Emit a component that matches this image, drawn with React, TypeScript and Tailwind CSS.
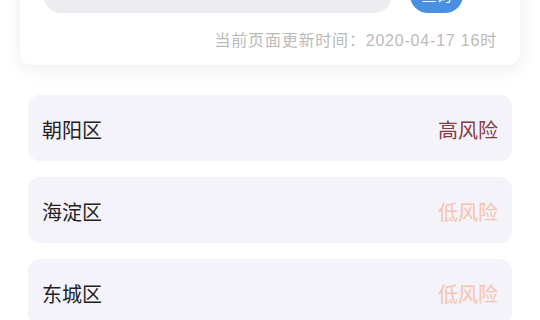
const AREAS = [
  { name: '朝阳区', level: '高风险', high: true },
  { name: '海淀区', level: '低风险', high: false },
  { name: '东城区', level: '低风险', high: false },
];

export default function App() {
  return (
    <div
      className="w-[540px] h-[320px] overflow-hidden bg-white"
      style={{ fontFamily: '"Liberation Sans", "Noto Sans CJK SC", sans-serif' }}
    >
      {/* 查询卡片 (上半部分被截断) */}
      <div className="mx-[20px] -mt-[40px] rounded-[12px] bg-white pt-[17px] pb-[14px] pl-[23px] pr-[23px] shadow-[0_4px_18px_rgba(0,0,0,0.08)]">
        <div className="flex items-center">
          <div className="h-[36px] w-[349px] rounded-full bg-[#ededf1]" />
          <button className="ml-[18px] h-[36px] w-[53px] rounded-full bg-[#4a90e2] pt-[2px] text-[15px] leading-[20px] text-white">
            查询
          </button>
        </div>
        <div className="mt-[18px] text-right text-[16px] leading-[20px] tracking-[0.8px] text-[#bababa]">
          当前页面更新时间：2020-04-17 16时
        </div>
      </div>

      {/* 地区列表 */}
      <div className="mt-[30px] flex flex-col gap-[16px] px-[28px]">
        {AREAS.map((a) => (
          <div
            key={a.name}
            className="flex h-[66px] items-center justify-between rounded-[12px] bg-[#f5f3fa] px-[14px] pt-[5px]"
          >
            <span className="text-[20px] leading-[24px] text-[#222222]">{a.name}</span>
            <span
              className={
                a.high
                  ? 'text-[20px] leading-[24px] text-[#8a3a40]'
                  : 'text-[20px] leading-[24px] text-[#f5c2ac]'
              }
            >
              {a.level}
            </span>
          </div>
        ))}
      </div>
    </div>
  );
}
